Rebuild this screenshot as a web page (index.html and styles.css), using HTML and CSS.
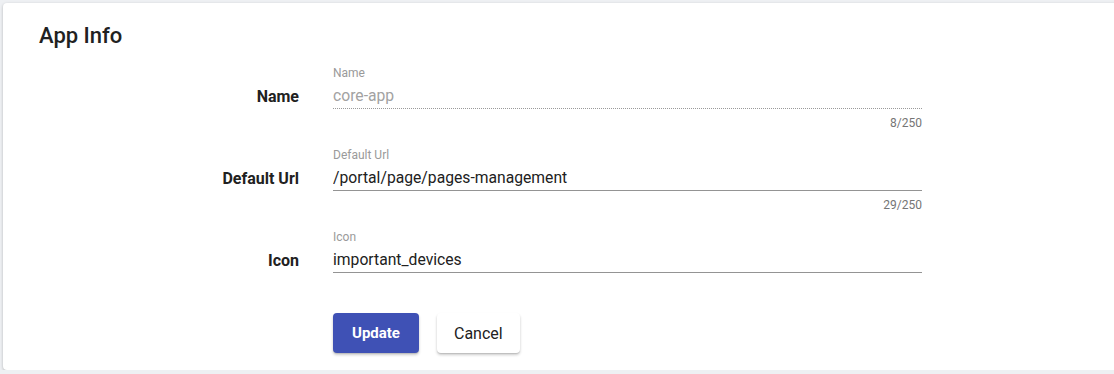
FILE: index.html
```html
<!DOCTYPE html>
<html lang="en">
<head>
  <meta charset="UTF-8">
  <meta name="viewport" content="width=device-width, initial-scale=1.0">
  <title>App Info</title>
  <link rel="stylesheet" href="styles.css">
</head>
<body>
  <div class="page">
    <div class="card">
      <h1>App Info</h1>

      <!-- Name -->
      <div class="row">
        <label class="row-label" for="name">Name</label>
        <div class="field disabled">
          <span class="float-label">Name</span>
          <input type="text" id="name" value="core-app" disabled>
          <div class="hint">8/250</div>
        </div>
      </div>

      <!-- Default Url -->
      <div class="row">
        <label class="row-label" for="defaultUrl">Default Url</label>
        <div class="field">
          <span class="float-label">Default Url</span>
          <input type="text" id="defaultUrl" value="/portal/page/pages-management">
          <div class="hint">29/250</div>
        </div>
      </div>

      <!-- Icon -->
      <div class="row">
        <label class="row-label" for="icon">Icon</label>
        <div class="field">
          <span class="float-label">Icon</span>
          <input type="text" id="icon" value="important_devices">
          <div class="hint"></div>
        </div>
      </div>

      <div class="row">
        <div></div>
        <div class="actions">
          <button class="btn btn-primary">Update</button>
          <button class="btn">Cancel</button>
        </div>
      </div>
    </div>
  </div>
</body>
</html>
```

FILE: styles.css
```css
/* Page */
body {
  margin: 0;
  font-family: Roboto, "Helvetica Neue", Arial, sans-serif;
  background-color: #eef0f3;
  color: #212121;
  overflow: hidden;
}

.page {
  padding: 3px 0 0 3px;
}

.card {
  background: #fff;
  border-radius: 4px;
  margin-right: -10px;
  padding: 19px 0 17px 36px;
  box-shadow: 0 1px 3px rgba(0, 0, 0, 0.25);
}

h1 {
  margin: 0 0 16px;
  font-size: 22px;
  line-height: 28px;
  font-weight: 500;
}

/* Form rows */
.row {
  display: grid;
  grid-template-columns: 260px 589px;
  column-gap: 34px;
}

.row-label {
  text-align: right;
  font-size: 16px;
  font-weight: 700;
  line-height: 20px;
  padding-top: 21px;
}

.field {
  display: flex;
  flex-direction: column;
  padding-bottom: 18px;
}

.float-label {
  font-size: 12px;
  line-height: 14px;
  color: #9a9a9a;
}

.field input {
  margin-top: 6px;
  padding: 0 0 2px;
  border: none;
  border-bottom: 1px solid #949494;
  font-family: Roboto, "Helvetica Neue", Arial, sans-serif;
  font-size: 15.7px;
  line-height: 20px;
  color: #212121;
  background: transparent;
  outline: none;
}

.field.disabled input {
  color: #a2a2a2;
  border-bottom: 1px dotted #9a9a9a;
}

.hint {
  height: 14px;
  margin-top: 7px;
  text-align: right;
  font-size: 12px;
  line-height: 14px;
  color: #757575;
}

/* Buttons */
.actions {
  display: flex;
  gap: 18px;
  padding-top: 1px;
}

.btn {
  height: 40px;
  padding: 0 17px;
  border: none;
  border-radius: 4px;
  background: #fff;
  color: #212121;
  font-family: Roboto, "Helvetica Neue", Arial, sans-serif;
  font-size: 16px;
  box-shadow: 0 2px 3px rgba(0, 0, 0, 0.2), 0 1px 1px rgba(0, 0, 0, 0.1);
  cursor: pointer;
}

.btn-primary {
  background: #3f51b5;
  color: #fff;
  font-weight: 700;
  font-size: 15px;
  padding: 0 19px;
}
```
